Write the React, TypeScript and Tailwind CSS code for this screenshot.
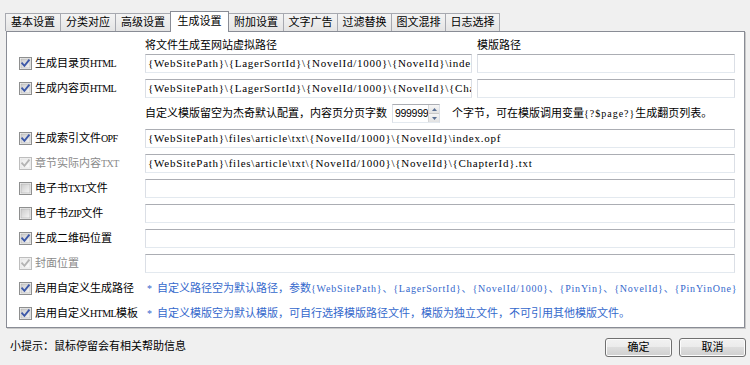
import React from "react";

const FONT = '"Liberation Serif","Noto Sans CJK SC",serif';

function CheckBox({ checked, disabled }: { checked: boolean; disabled?: boolean }) {
  const border = disabled ? "#bdbdbd" : "#8e8f8f";
  const check = disabled ? "#b4b4b4" : "#3c58a8";
  const id = disabled ? "gd" : checked ? "gc" : "gu";
  return (
    <svg width="13" height="13" viewBox="0 0 13 13" className="shrink-0">
      <defs>
        <linearGradient id={id} x1="0" y1="0" x2="1" y2="1">
          {disabled ? (
            <>
              <stop offset="0" stopColor="#ececec" />
              <stop offset="1" stopColor="#fbfbfb" />
            </>
          ) : (
            <>
              <stop offset="0" stopColor="#cbcbcb" />
              <stop offset="1" stopColor="#f6f6f6" />
            </>
          )}
        </linearGradient>
      </defs>
      <rect x="0.5" y="0.5" width="12" height="12" fill="#f4f4f4" stroke={border} />
      <rect x="2" y="2" width="9" height="9" fill={`url(#${id})`} stroke={disabled ? "#dcdcdc" : "#aeaeae"} strokeWidth="0.6" />
      {checked && (
        <path d="M3.2 6.4 L5.4 8.8 L9.8 3.4" fill="none" stroke={check} strokeWidth="1.9" strokeLinecap="square" strokeLinejoin="miter" />
      )}
    </svg>
  );
}

function Lat({ children }: { children: React.ReactNode }) {
  return <span className="text-[10px] tracking-[-0.6px]">{children}</span>;
}

function Label({
  checked,
  disabled,
  children,
}: {
  checked: boolean;
  disabled?: boolean;
  children: React.ReactNode;
}) {
  return (
    <div className="w-[138px] shrink-0 flex items-center pl-[12px] gap-[3px] h-full">
      <CheckBox checked={checked} disabled={disabled} />
      <span className={`text-[11px] leading-none whitespace-nowrap ${disabled ? "text-[#8a8a8a]" : "text-black"}`}>
        {children}
      </span>
    </div>
  );
}

function Input({ w, value }: { w: string; value?: string }) {
  return (
    <div
      className={`${w} h-[19px] shrink-0 bg-white border border-t-[#abadb3] border-x-[#dbdfe6] border-b-[#e3e9ef] overflow-hidden flex items-center pl-[2px]`}
    >
      {value && (
        <span className="text-[11px] tracking-[0.75px] leading-none whitespace-nowrap text-black">{value}</span>
      )}
    </div>
  );
}

const tabs = ["基本设置", "分类对应", "高级设置", "生成设置", "附加设置", "文字广告", "过滤替换", "图文混排", "日志选择"];
const tabW = ["w-[55px]", "w-[55px]", "w-[55px]", "w-[59px]", "w-[54px]", "w-[54px]", "w-[54px]", "w-[54px]", "w-[55px]"];

export default function App() {
  return (
    <div
      className="w-[750px] h-[365px] bg-[#f0f0f0] overflow-hidden text-black"
      style={{ fontFamily: FONT }}
    >
      {/* Tab strip */}
      <div className="flex items-end pl-[5px] pt-[10px] h-[31px] relative z-10">
        {tabs.map((t, i) => {
          const active = i === 3;
          const last = i === tabs.length - 1;
          return active ? (
            <div
              key={t}
              className={`${tabW[i]} h-[21px] bg-white border border-b-0 border-[#898c95] flex items-center justify-center text-[11px] leading-none pb-[2px] -mb-px`}
            >
              {t}
            </div>
          ) : (
            <div
              key={t}
              className={`${tabW[i]} h-[18px] bg-linear-to-b from-[#f4f4f4] to-[#e4e4e4] border-t border-[#a7a9b0] ${
                i === 4 ? "" : "border-l"
              } ${last ? "border-r" : ""} flex items-center justify-center text-[11px] leading-none`}
            >
              {t}
            </div>
          );
        })}
      </div>

      {/* Panel */}
      <div className="ml-[6px] w-[739px] h-[297px] bg-white border border-[#898c95] shadow-[1px_1px_0_#c9c9c9] pt-[5px]">
        {/* header */}
        <div className="flex h-[17px] items-center text-[11px] leading-none">
          <div className="w-[138px] shrink-0" />
          <div className="w-[327px] shrink-0">将文件生成至网站虚拟路径</div>
          <div className="ml-[5px]">模版路径</div>
        </div>
        <div className="flex flex-col gap-[6px]">
          <div className="flex h-[19px] items-center">
            <Label checked>生成目录页<Lat>HTML</Lat></Label>
            <Input w="w-[327px]" value="{WebSitePath}\{LagerSortId}\{NovelId/1000}\{NovelId}\index.html" />
            <div className="w-[5px] shrink-0" />
            <Input w="w-[258px]" />
          </div>
          <div className="flex h-[19px] items-center">
            <Label checked>生成内容页<Lat>HTML</Lat></Label>
            <Input w="w-[327px]" value="{WebSitePath}\{LagerSortId}\{NovelId/1000}\{NovelId}\{ChapterId}.html" />
            <div className="w-[5px] shrink-0" />
            <Input w="w-[258px]" />
          </div>
          <div className="flex h-[19px] items-center text-[11px] leading-none whitespace-nowrap">
            <div className="w-[138px] shrink-0" />
            <span>自定义模版留空为杰奇默认配置，内容页分页字数</span>
            <div className="ml-[5px] w-[48px] h-[19px] flex bg-white border border-t-[#abadb3] border-x-[#dbdfe6] border-b-[#e3e9ef]">
              <div
                className="flex-1 flex items-center pl-[2px] text-[10.5px] tracking-[-0.3px]"
                style={{ fontFamily: '"Liberation Sans",sans-serif' }}
              >
                999999
              </div>
              <div className="w-[12px] flex flex-col border-l border-[#d6d6d6]">
                <div className="flex-1 flex items-center justify-center bg-linear-to-b from-[#f6f6f6] to-[#e2e2e2] border-b border-[#c8c8c8]">
                  <svg width="5" height="3" viewBox="0 0 5 3"><path d="M0 3 L2.5 0 L5 3 Z" fill="#5a6f93" /></svg>
                </div>
                <div className="flex-1 flex items-center justify-center bg-linear-to-b from-[#f6f6f6] to-[#e2e2e2]">
                  <svg width="5" height="3" viewBox="0 0 5 3"><path d="M0 0 L2.5 3 L5 0 Z" fill="#5a6f93" /></svg>
                </div>
              </div>
            </div>
            <span className="ml-[12px]">
              个字节，可在模版调用变量<span className="text-[10px] tracking-[1px]">{"{?$page?}"}</span>生成翻页列表。
            </span>
          </div>
          <div className="flex h-[19px] items-center">
            <Label checked>生成索引文件<Lat>OPF</Lat></Label>
            <Input w="w-[590px]" value="{WebSitePath}\files\article\txt\{NovelId/1000}\{NovelId}\index.opf" />
          </div>
          <div className="flex h-[19px] items-center">
            <Label checked disabled>章节实际内容<Lat>TXT</Lat></Label>
            <Input w="w-[590px]" value="{WebSitePath}\files\article\txt\{NovelId/1000}\{NovelId}\{ChapterId}.txt" />
          </div>
          <div className="flex h-[19px] items-center">
            <Label checked={false}>电子书<Lat>TXT</Lat>文件</Label>
            <Input w="w-[590px]" />
          </div>
          <div className="flex h-[19px] items-center">
            <Label checked={false}>电子书<Lat>ZIP</Lat>文件</Label>
            <Input w="w-[590px]" />
          </div>
          <div className="flex h-[19px] items-center">
            <Label checked>生成二维码位置</Label>
            <Input w="w-[590px]" />
          </div>
          <div className="flex h-[19px] items-center">
            <Label checked disabled>封面位置</Label>
            <Input w="w-[590px]" />
          </div>
          <div className="flex h-[19px] items-center">
            <Label checked>启用自定义生成路径</Label>
            <div className="text-[11px] leading-none whitespace-nowrap text-[#3468cc] pl-[2px]">
              <span className="text-[10px]">*</span>
              <span className="ml-[5px]">自定义路径空为默认路径，参数</span>
              <span className="text-[10px] tracking-[0.8px]">
                {"{WebSitePath}"}、{"{LagerSortId}"}、{"{NovelId/1000}"}、{"{PinYin}"}、{"{NovelId}"}、{"{PinYinOne}"}
              </span>
            </div>
          </div>
          <div className="flex h-[19px] items-center">
            <Label checked>启用自定义<Lat>HTML</Lat>模板</Label>
            <div className="text-[11px] leading-none whitespace-nowrap text-[#3468cc] pl-[2px]">
              <span className="text-[10px]">*</span>
              <span className="ml-[5px]">自定义模版空为默认模版，可自行选择模版路径文件，模版为独立文件，不可引用其他模版文件。</span>
            </div>
          </div>
        </div>
      </div>

      {/* Bottom */}
      <div className="flex items-center h-[37px] pl-[10px] pr-[4px]">
        <span className="text-[11px] leading-none">小提示：鼠标停留会有相关帮助信息</span>
        <div className="ml-auto flex gap-[7px] pt-[1px]">
          <button className="w-[67px] h-[19px] rounded-[3px] border border-[#707070] bg-[linear-gradient(#f2f2f2,#ebebeb_50%,#dddddd_50%,#cfcfcf)] text-[11px] leading-none shadow-[inset_0_0_0_1px_#fcfcfc]">
            确定
          </button>
          <button className="w-[67px] h-[19px] rounded-[3px] border border-[#707070] bg-[linear-gradient(#f2f2f2,#ebebeb_50%,#dddddd_50%,#cfcfcf)] text-[11px] leading-none shadow-[inset_0_0_0_1px_#fcfcfc]">
            取消
          </button>
        </div>
      </div>
    </div>
  );
}
